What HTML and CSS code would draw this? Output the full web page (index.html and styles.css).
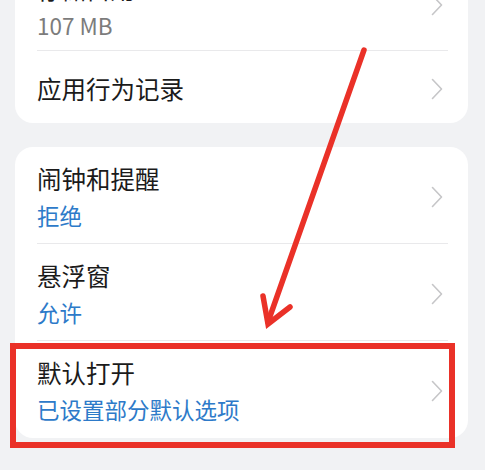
FILE: index.html
```html
<!DOCTYPE html>
<html lang="zh-CN">
<head>
<meta charset="utf-8">
<link rel="stylesheet" href="styles.css">
</head>
<body>
<div class="page">
  <div class="card card-first">
    <div class="row row-two row-top">
      <div class="texts">
        <div class="title">存储占用</div>
        <div class="sub gray">107 MB</div>
      </div>
      <svg class="chev" viewBox="0 0 12 22"><path d="M1.5 1.5 L10.5 11 L1.5 20.5"/></svg>
    </div>
    <div class="divider"></div>
    <div class="row row-one">
      <div class="texts">
        <div class="title">应用行为记录</div>
      </div>
      <svg class="chev" viewBox="0 0 12 22"><path d="M1.5 1.5 L10.5 11 L1.5 20.5"/></svg>
    </div>
  </div>

  <div class="card">
    <div class="row row-two">
      <div class="texts">
        <div class="title">闹钟和提醒</div>
        <div class="sub blue">拒绝</div>
      </div>
      <svg class="chev" viewBox="0 0 12 22"><path d="M1.5 1.5 L10.5 11 L1.5 20.5"/></svg>
    </div>
    <div class="divider"></div>
    <div class="row row-two">
      <div class="texts">
        <div class="title">悬浮窗</div>
        <div class="sub blue">允许</div>
      </div>
      <svg class="chev" viewBox="0 0 12 22"><path d="M1.5 1.5 L10.5 11 L1.5 20.5"/></svg>
    </div>
    <div class="divider"></div>
    <div class="row row-two row-last">
      <div class="texts">
        <div class="title">默认打开</div>
        <div class="sub blue">已设置部分默认选项</div>
      </div>
      <svg class="chev" viewBox="0 0 12 22"><path d="M1.5 1.5 L10.5 11 L1.5 20.5"/></svg>
    </div>
  </div>
</div>

<div class="highlight"></div>
<svg class="arrow" viewBox="0 0 485 470" width="485" height="470">
  <line x1="364" y1="50" x2="268" y2="322"/>
  <polyline points="263,296 268,324 290,307"/>
</svg>
</body>
</html>
```

FILE: styles.css
```css
html, body {
  margin: 0;
  padding: 0;
}
body {
  width: 485px;
  height: 470px;
  overflow: hidden;
  background: #f1f2f4;
  font-family: "Noto Sans CJK SC", "Noto Sans", sans-serif;
  position: relative;
}
.page {
  padding: 0 17px 0 15px;
  display: flex;
  flex-direction: column;
  gap: 24px;
}
.card {
  background: #ffffff;
  border-radius: 18px;
  display: flex;
  flex-direction: column;
}
.card-first {
  margin-top: -43px;
}
.row {
  display: flex;
  justify-content: space-between;
  padding: 0 25px 0 22px;
  box-sizing: border-box;
  align-items: flex-start;
}
.row-two {
  height: 96px;
  padding-top: 14.5px;
}
.row-top {
  height: 93px;
}
.row-last {
  height: 97px;
}
.row-one {
  height: 72px;
  padding-top: 20.5px;
}
.row-two .chev {
  margin-top: 24px;
}
.row-top .chev {
  margin-top: 22px;
}
.row-one .chev {
  margin-top: 6px;
}
.texts {
  display: flex;
  flex-direction: column;
  gap: 4px;
}
.title {
  font-size: 24.5px;
  line-height: 34px;
  color: #1b1b1b;
}
.sub {
  font-size: 22.5px;
  line-height: 30px;
}
.gray { color: #7c7c7c; }
.blue { color: #2d7ac9; }
.divider {
  height: 1px;
  background: #e9e9eb;
  margin: 0 20px 0 22px;
}
.chev {
  width: 12px;
  height: 22px;
  flex: none;
}
.chev path {
  fill: none;
  stroke: #c6c6c8;
  stroke-width: 1.6;
  stroke-linecap: round;
  stroke-linejoin: round;
}
.highlight {
  position: absolute;
  left: 10px;
  top: 343px;
  width: 445px;
  height: 105px;
  box-sizing: border-box;
  border: 6px solid #ea3128;
}
.arrow {
  position: absolute;
  left: 0;
  top: 0;
  pointer-events: none;
}
.arrow line, .arrow polyline {
  fill: none;
  stroke: #ea3128;
  stroke-width: 5.5;
  stroke-linecap: round;
  stroke-linejoin: miter;
}
```
